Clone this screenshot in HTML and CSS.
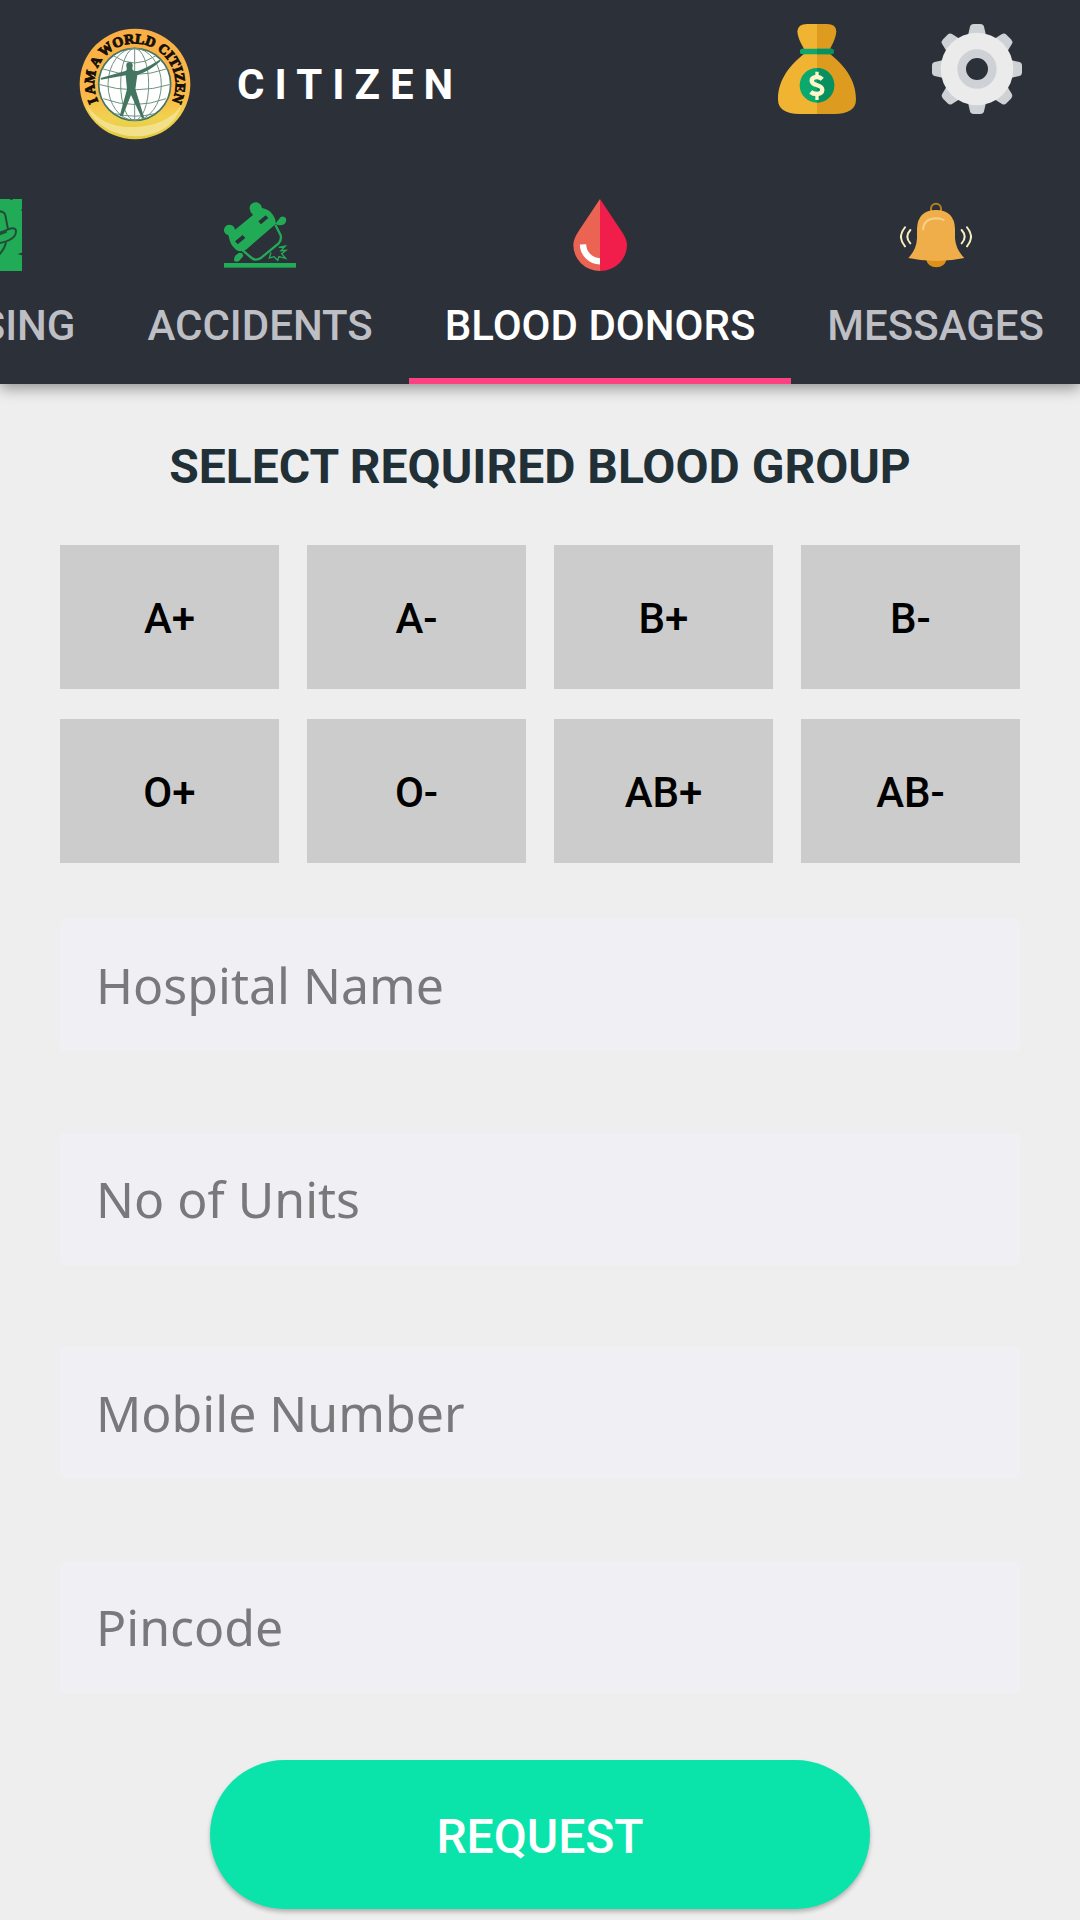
FILE: index.html
```html
<!DOCTYPE html>
<html lang="en">
<head>
<meta charset="utf-8">
<meta name="viewport" content="width=device-width, initial-scale=1">
<title>Citizen</title>
<link rel="stylesheet" href="styles.css">
</head>
<body>
<header class="header">
  <div class="toolbar">
    <svg class="logo" viewBox="57 53 336 336" aria-hidden="true">
      <defs>
        <linearGradient id="ring" x1="0" y1="0" x2="0" y2="1">
          <stop offset="0" stop-color="#f9ae45"/>
          <stop offset=".6" stop-color="#fbb848"/>
          <stop offset=".8" stop-color="#f0d24e"/>
          <stop offset="1" stop-color="#e3c93f"/>
        </linearGradient>
        <path id="arc" d="M148 316A122 122 0 1 1 302 316"/>
      </defs>
      <circle cx="225" cy="221" r="166" fill="url(#ring)"/>
      <path d="M80 284C115 335 165 352 225 350S340 325 366 282C345 350 285 380 225 378S100 345 80 284z" fill="#f3e08a"/>
      <circle cx="224" cy="222" r="108" fill="#fff" stroke="#447560" stroke-width="5"/>
      <g fill="none" stroke="#6f9282" stroke-width="3">
        <path d="M224 114V330M116 222Q224 255 332 222M126 175Q224 210 322 175M160 136Q224 180 288 136M130 265Q224 300 318 265M165 310Q224 325 285 310"/>
        <ellipse cx="224" cy="222" rx="42" ry="108"/>
        <ellipse cx="224" cy="222" rx="80" ry="108"/>
      </g>
      <path fill="#447560" d="M122 203L196 182Q202 180 200 172Q195 157 208 155Q222 156 217 173Q216 181 226 182Q245 182 299 148L301 153Q270 182 232 194L226 235L253 324L245 322L213 254L188 318L179 317L201 237L197 195L123 208z"/>
      <text class="logo-text"><textPath href="#arc" startOffset="50%" text-anchor="middle">I AM A WORLD CITIZEN</textPath></text>
    </svg>
    <h1 class="title">CITIZEN</h1>
    <div class="actions">
      <button class="icon-button" type="button" aria-label="Donate">
        <svg viewBox="35 42 270 270">
          <path fill="#f0b432" d="M140 42H170V312H118Q53 312 53 268C53 205 95 160 130 133V115Q112 85 111 64Q113 42 140 42z"/>
          <path fill="#dd9b20" d="M200 42H170V312H222Q287 312 287 268C287 205 245 160 210 133V115Q227 85 228 64Q227 42 200 42z"/>
          <rect x="119" y="116" width="101" height="17" rx="6" fill="#0da66c"/>
          <path d="M170 116h44q6 0 6 6v5q0 6-6 6h-44z" fill="#089060"/>
          <circle cx="170" cy="226" r="52" fill="#0aaa6e"/>
          <path d="M170 174a52 52 0 0 1 0 104z" fill="#08905f"/>
          <path d="M186 208Q178 200 168 201Q154 203 154 212Q155 221 169 225Q186 230 186 240Q185 251 169 252Q158 252 151 246" fill="none" stroke="#fff5cc" stroke-width="13"/>
          <path d="M170 185V202M170 251V270" fill="none" stroke="#fff5cc" stroke-width="10"/>
        </svg>
      </button>
      <button class="icon-button" type="button" aria-label="Settings">
        <svg viewBox="516 42 270 270">
          <defs><path id="tooth" d="M623 80L630 50Q632 42 641 42H661Q670 42 672 50L679 80z"/></defs>
          <g fill="#ced2d6">
            <use href="#tooth"/>
            <use href="#tooth" transform="rotate(45 651 177)"/>
            <use href="#tooth" transform="rotate(90 651 177)"/>
            <use href="#tooth" transform="rotate(135 651 177)"/>
            <use href="#tooth" transform="rotate(180 651 177)"/>
            <use href="#tooth" transform="rotate(225 651 177)"/>
            <use href="#tooth" transform="rotate(270 651 177)"/>
            <use href="#tooth" transform="rotate(315 651 177)"/>
          </g>
          <circle cx="651" cy="177" r="109" fill="#ebebeb"/>
          <circle cx="651" cy="177" r="46" fill="#2c3038" stroke="#ced2d6" stroke-width="26"/>
        </svg>
      </button>
    </div>
  </div>
  <nav class="tabs">
    <a class="tab" href="#missing">
      <svg class="tab-icon" viewBox="-135 57 216 216" aria-hidden="true">
        <path fill="#22ab57" d="M-135 57H28L34 60L40 57H66V87L63 90L66 93V218L53 222L66 226V273H-135z"/>
        <g fill="none" stroke="#234c38" stroke-width="6">
          <path d="M-60 98Q-20 88 8 96Q14 98 16 106L24 148Q-10 165 -50 166M24 148Q48 140 48 154Q48 172 26 181Q-5 194 -50 192M20 155Q0 165 -50 174M18 187Q14 207 -4 226"/>
        </g>
      </svg>
      MISSING
    </a>
    <a class="tab" href="#accidents">
      <svg class="tab-icon" viewBox="675 57 216 216" aria-hidden="true">
        <g fill="#22ab57">
          <rect x="675" y="249" width="216" height="14"/>
          <path d="M693 184L688 166Q673 160 675 148Q678 134 692 134Q706 135 708 149L762 105Q748 91 753 78Q759 66 773 67Q786 70 789 84Q812 88 822 105Q829 114 831 131L741 209Q725 217 713 211Q698 199 693 184z"/>
          <path d="M830 130L845 111Q855 107 861 115Q863 128 855 133Q846 138 834 134z"/>
          <path d="M730 220L733 228L721 242Q713 248 706 243Q703 235 710 226L720 218z"/>
        </g>
        <path d="M829 134L845 166Q848 181 839 190L787 233Q770 244 758 234L731 211" fill="none" stroke="#22ab57" stroke-width="7"/>
        <path d="M708 184L731 165L739 174L716 193zM778 124L800 106L808 114L786 133z" fill="#2c3038"/>
        <path d="M816 217L811 234L825 230L836 241L840 230L860 235L848 221L861 211L846 212L859 198L839 202" fill="none" stroke="#22ab57" stroke-width="4"/>
      </svg>
      ACCIDENTS
    </a>
    <a class="tab tab-active" href="#blood-donors" aria-current="page">
      <svg class="tab-icon" viewBox="492 57 216 216" aria-hidden="true">
        <path fill="#eb6353" d="M600 57L538 150Q520 176 520 195A80 78 0 0 0 600 273z"/>
        <path fill="#f11d4a" d="M600 57L662 150Q681 176 681 195A80 78 0 0 1 600 273z"/>
        <path d="M549 193A52 52 0 0 0 600 244" fill="none" stroke="#fff" stroke-width="19"/>
      </svg>
      BLOOD DONORS
    </a>
    <a class="tab" href="#messages">
      <svg class="tab-icon" viewBox="297 57 216 216" aria-hidden="true">
        <path d="M390 95V86A15 15 0 0 1 420 86V95" fill="none" stroke="#b98023" stroke-width="6"/>
        <path d="M375 238Q381 262 406 262T437 238z" fill="#dc9019"/>
        <path d="M322 234Q347 208 348 175V146Q350 91 405 90Q460 91 462 146V175Q464 208 490 234Q450 243 406 243T322 234z" fill="#efae49"/>
        <path d="M366 148Q369 116 405 115Q420 115 428 120" fill="none" stroke="#f9cf87" stroke-width="6" stroke-linecap="round"/>
        <path d="M312 142Q288 170 312 199M328 150Q310 170 328 190M482 150Q500 170 482 190M498 142Q522 170 498 199" fill="none" stroke="#f7efc0" stroke-width="6" stroke-linecap="round"/>
      </svg>
      MESSAGES
    </a>
  </nav>
</header>
<main class="content">
  <h2 class="heading">SELECT REQUIRED BLOOD GROUP</h2>
  <form class="form">
    <div class="groups">
      <button class="group" type="button">A+</button>
      <button class="group" type="button">A-</button>
      <button class="group" type="button">B+</button>
      <button class="group" type="button">B-</button>
      <button class="group" type="button">O+</button>
      <button class="group" type="button">O-</button>
      <button class="group" type="button">AB+</button>
      <button class="group" type="button">AB-</button>
    </div>
    <div class="fields">
      <input class="field" type="text" placeholder="Hospital Name" aria-label="Hospital Name">
      <input class="field" type="text" inputmode="numeric" placeholder="No of Units" aria-label="No of Units">
      <input class="field" type="tel" placeholder="Mobile Number" aria-label="Mobile Number">
      <input class="field" type="text" inputmode="numeric" placeholder="Pincode" aria-label="Pincode">
    </div>
    <button class="submit" type="submit">REQUEST</button>
  </form>
</main>
</body>
</html>
```
FILE: styles.css
```css
* {
  box-sizing: border-box;
}

body {
  margin: 0;
  background: #eeeeee;
  font-family: Roboto, sans-serif;
}

button {
  border: 0;
  font-family: inherit;
  cursor: pointer;
}

.header {
  background: #2c3038;
  box-shadow: 0 4px 14px rgba(0, 0, 0, 0.4);
  overflow-x: clip;
}

.toolbar {
  display: flex;
  align-items: center;
  height: 168px;
  padding: 0 58px 0 79px;
}

.logo {
  width: 112px;
  height: 112px;
}

.logo-text {
  font: bold 42px "Liberation Serif", serif;
  fill: #16110a;
  stroke: #16110a;
  stroke-width: 3px;
}

.title {
  margin: 0 0 0 46px;
  padding-top: 2px;
  color: #fff;
  font-size: 42px;
  line-height: 50px;
  font-weight: 700;
  letter-spacing: 10px;
}

.actions {
  display: flex;
  align-self: flex-start;
  gap: 70px;
  margin-left: auto;
  padding-top: 24px;
}

.icon-button {
  width: 90px;
  height: 90px;
  padding: 0;
  background: none;
}

.icon-button svg {
  display: block;
}

/* The strip is scrolled to its end, so the first tab runs off the left edge. */
.tabs {
  display: flex;
  justify-content: flex-end;
}

.tab {
  display: flex;
  flex: none;
  flex-direction: column;
  align-items: center;
  gap: 30px;
  padding: 31px 36px 27px;
  border-bottom: 6px solid transparent;
  color: #bebfc4;
  font-size: 42px;
  line-height: 50px;
  font-weight: 500;
  text-decoration: none;
  white-space: nowrap;
}

.tab-active {
  border-bottom-color: #ff4081;
  color: #fff;
}

.tab-icon {
  width: 72px;
  height: 72px;
}

.content {
  padding: 55px 60px 11px;
}

.heading {
  margin: 0 0 50px;
  color: #213037;
  font-size: 48px;
  line-height: 56px;
  font-weight: 700;
  text-align: center;
}

.form {
  display: flex;
  flex-direction: column;
}

.groups {
  display: grid;
  grid-template-columns: repeat(4, 1fr);
  gap: 30px 28px;
}

.group {
  height: 144px;
  padding: 2px 0 0;
  background: #cccccc;
  color: #000;
  font-size: 42px;
  font-weight: 500;
}

.fields {
  display: flex;
  flex-direction: column;
  gap: 82px;
  margin-top: 56px;
}

.field {
  width: 100%;
  height: 132px;
  padding: 0 36px;
  border: 0;
  border-radius: 4px;
  background: #f0eff4;
  color: #333;
  font-family: "Noto Sans", sans-serif;
  font-size: 50px;
}

.field::placeholder {
  color: #79797b;
  opacity: 1;
}

.submit {
  height: 149px;
  margin: 67px 150px 0;
  padding: 4px 0 0;
  border-radius: 75px;
  background: #0ae4ab;
  box-shadow: 0 3px 4px rgba(0, 0, 0, 0.25);
  color: #fff;
  font-size: 48px;
  font-weight: 500;
}
```
